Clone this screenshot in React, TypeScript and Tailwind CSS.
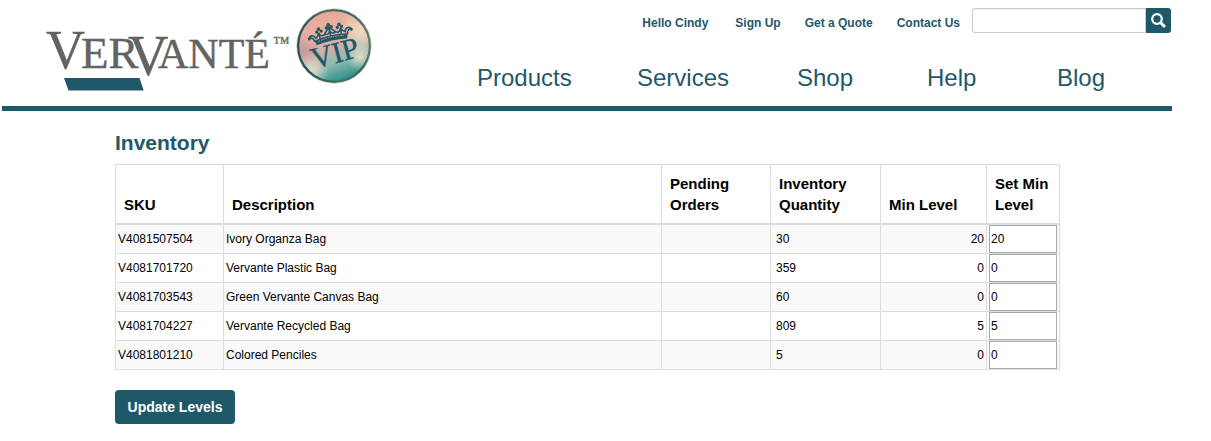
import { useState } from "react";

const topLinks = ["Sign Up", "Get a Quote", "Contact Us"];

const items = [
  { sku: "V4081507504", description: "Ivory Organza Bag", quantity: 30, min: 20 },
  { sku: "V4081701720", description: "Vervante Plastic Bag", quantity: 359, min: 0 },
  { sku: "V4081703543", description: "Green Vervante Canvas Bag", quantity: 60, min: 0 },
  { sku: "V4081704227", description: "Vervante Recycled Bag", quantity: 809, min: 5 },
  { sku: "V4081801210", description: "Colored Penciles", quantity: 5, min: 0 },
];

function Logo() {
  return (
    <svg
      width="336"
      height="88"
      viewBox="40 4 336 88"
      role="img"
      aria-label="Vervanté VIP"
      fontFamily="'Liberation Serif', serif"
    >
      <defs>
        <linearGradient id="glow" x1="0.3" y1="0" x2="0.65" y2="1">
          <stop offset="0" stopColor="#e9a594" />
          <stop offset="0.35" stopColor="#ecb3a4" />
          <stop offset="0.52" stopColor="#d0aea8" />
          <stop offset="0.72" stopColor="#8fbab0" />
          <stop offset="1" stopColor="#1d8a84" />
        </linearGradient>
        <linearGradient id="rim" x1="0" y1="0.6" x2="1" y2="0.4">
          <stop offset="0" stopColor="#1c4f58" />
          <stop offset="0.5" stopColor="#44706c" />
          <stop offset="0.8" stopColor="#2f6668" />
          <stop offset="1" stopColor="#5d7c70" />
        </linearGradient>
        <radialGradient id="cream">
          <stop offset="0" stopColor="#f3e3c6" stopOpacity="0.85" />
          <stop offset="1" stopColor="#f3e3c6" stopOpacity="0" />
        </radialGradient>
        <radialGradient id="plum">
          <stop offset="0" stopColor="#b48a98" stopOpacity="0.6" />
          <stop offset="1" stopColor="#b48a98" stopOpacity="0" />
        </radialGradient>
        <clipPath id="disc">
          <circle cx="334" cy="46" r="35" />
        </clipPath>
      </defs>

      <text fill="#636363" stroke="#636363" strokeWidth="0.4">
        <tspan x="46" y="68" fontSize="54">V</tspan>
        <tspan x="81" y="68" fontSize="45">ER</tspan>
        <tspan x="128" y="75" fontSize="56">V</tspan>
        <tspan x="158" y="68" fontSize="42">ANTÉ</tspan>
      </text>
      <text x="273" y="48" fontSize="17" fill="#636363" stroke="#636363" strokeWidth="0.3">™</text>
      <path d="M64 78H139.500L143.700 90.500H68.500Z" fill="#1f5869" />

      <circle cx="334" cy="46" r="36.500" fill="url(#glow)" />
      <g clipPath="url(#disc)">
        <circle cx="360" cy="32" r="22" fill="url(#cream)" />
        <circle cx="303" cy="50" r="18" fill="url(#plum)" />
        <circle cx="312" cy="70" r="17" fill="url(#cream)" />
        <circle cx="360" cy="57" r="14" fill="url(#cream)" />
      </g>
      <circle cx="334" cy="46" r="36" fill="none" stroke="url(#rim)" strokeWidth="2.500" />
      <circle cx="334" cy="46" r="37.300" fill="none" stroke="#ddd6ad" strokeOpacity="0.7" strokeWidth="0.8" />

      <g transform="translate(331 37) rotate(-13)" fill="#1f5869">
        <path d="M-17 0Q0 -4 17 0L15.500 5Q0 2 -15.500 5Z" />
        <path d="M-13 1.500Q0 -1.500 13 1.500" fill="none" stroke="#dfb0a2" strokeWidth="0.8" strokeDasharray="1.500 1" />
        <path
          d="M-17 1C-17 -3 -20 -5 -22 -3C-20 -7 -16 -6 -15 -2C-13 -3 -12 -5 -11 -7C-11 -3 -7 -2 -5 -5L0 -10L5 -5C7 -2 11 -3 11 -7C12 -5 13 -3 15 -2C16 -6 20 -7 22 -3C20 -5 17 -3 17 1M-6 -4Q0 -2 0 -8Q0 -2 6 -4M-11 -7V-1M11 -7V-1M0 -9V-2"
          fill="none"
          stroke="#1f5869"
          strokeWidth="1.500"
        />
        <circle cx="0" cy="-12.500" r="1.900" />
        <circle cx="-2.500" cy="-10" r="1.700" />
        <circle cx="2.500" cy="-10" r="1.700" />
        <circle cx="-10.500" cy="-10.500" r="1.800" />
        <circle cx="-12.800" cy="-8" r="1.600" />
        <circle cx="-8.300" cy="-8" r="1.600" />
        <circle cx="10.500" cy="-10.500" r="1.800" />
        <circle cx="12.800" cy="-8" r="1.600" />
        <circle cx="8.300" cy="-8" r="1.600" />
        <circle cx="-21.500" cy="-3" r="1.500" />
        <circle cx="21.500" cy="-3" r="1.500" />
      </g>
      <text
        transform="translate(314 69) rotate(-15)"
        fontSize="30"
        fill="#1f5869"
        stroke="#1f5869"
        strokeWidth="0.4"
      >
        VIP
      </text>
    </svg>
  );
}

function Header() {
  return (
    <header className="flex justify-between border-b-[5px] border-[#1f5869] pb-2.5">
      <a href="#home" className="ml-[38px] mt-1 shrink-0">
        <Logo />
      </a>
      <div className="flex flex-col pt-2">
        <div className="flex items-center justify-end pr-px text-xs font-bold text-[#1f5869]">
          <a href="#account" className="mr-[27px] mt-1">Hello Cindy</a>
          <nav aria-label="Account" className="mr-3 mt-1 flex gap-6">
            {topLinks.map((label) => (
              <a key={label} href="#top">{label}</a>
            ))}
          </nav>
          <form className="flex" onSubmit={(e) => e.preventDefault()}>
            <input
              type="search"
              aria-label="Search"
              className="h-[25px] w-[174px] rounded-l-[3px] border border-[#cccccc] px-2 font-normal shadow-[inset_0_1px_1px_rgba(0,0,0,0.075)] outline-none"
            />
            <button
              type="submit"
              aria-label="Submit search"
              className="flex h-[25px] w-[25px] items-center justify-center rounded-r-[3px] bg-[#1f5869]"
            >
              <svg width="15" height="15" viewBox="0 0 15 15" fill="none" stroke="white" aria-hidden="true">
                <circle cx="6" cy="6" r="4.800" strokeWidth="2.200" />
                <path d="M9.700 9.700L13 13" strokeWidth="3" strokeLinecap="round" />
              </svg>
            </button>
          </form>
        </div>
        <nav
          aria-label="Main"
          className="mt-[27px] grid grid-cols-[160px_160px_130px_130px_115px] text-2xl leading-9 text-[#1f5869]"
        >
          <a href="#products">Products</a>
          <a href="#services">Services</a>
          <a href="#shop">Shop</a>
          <a href="#help">Help</a>
          <a href="#blog">Blog</a>
        </nav>
      </div>
    </header>
  );
}

const headCell = "border border-b-2 border-[#dddddd] p-2 text-left align-bottom";
const bodyCell = "border border-[#dddddd] px-0.5 py-0";

export default function App() {
  const [levels, setLevels] = useState(items.map((item) => String(item.min)));

  return (
    <div className="ml-0.5 max-w-[1170px] bg-white font-['Liberation_Sans',Arial,sans-serif] text-black">
      <Header />
      <main className="pl-[113px] pr-[112px] pt-5">
        <h1 className="mb-[9px] text-[21px] font-bold leading-6 text-[#1f5869]">Inventory</h1>
        <form onSubmit={(e) => e.preventDefault()}>
          <table className="w-full table-fixed border-collapse text-xs">
            <colgroup>
              <col className="w-[108px]" />
              <col />
              <col className="w-[109px]" />
              <col className="w-[110px]" />
              <col className="w-[106px]" />
              <col className="w-[73px]" />
            </colgroup>
            <thead className="text-[15px] leading-[21px]">
              <tr>
                <th className={headCell}>SKU</th>
                <th className={headCell}>Description</th>
                <th className={headCell}>Pending Orders</th>
                <th className={headCell}>Inventory Quantity</th>
                <th className={headCell}>Min Level</th>
                <th className={headCell}>Set Min Level</th>
              </tr>
            </thead>
            <tbody>
              {items.map((item, index) => (
                <tr key={item.sku} className="odd:bg-[#f9f9f9]">
                  <td className={bodyCell}>{item.sku}</td>
                  <td className={bodyCell}>{item.description}</td>
                  <td className={bodyCell}></td>
                  <td className="border border-[#dddddd] py-0 pl-[5px] pr-0.5">{item.quantity}</td>
                  <td className="border border-[#dddddd] px-0.5 py-0 text-right">{item.min}</td>
                  <td className={bodyCell}>
                    <input
                      type="text"
                      aria-label={`Set min level for ${item.description}`}
                      value={levels[index]}
                      onChange={(e) =>
                        setLevels(levels.map((level, i) => (i === index ? e.target.value : level)))
                      }
                      className="block h-7 w-[68px] border border-[#a9a9a9] bg-white px-px"
                    />
                  </td>
                </tr>
              ))}
            </tbody>
          </table>
          <button
            type="submit"
            className="mt-5 min-w-[120px] rounded bg-[#1f5869] px-3 py-[7px] text-sm font-bold leading-5 text-white"
          >
            Update Levels
          </button>
        </form>
      </main>
    </div>
  );
}
